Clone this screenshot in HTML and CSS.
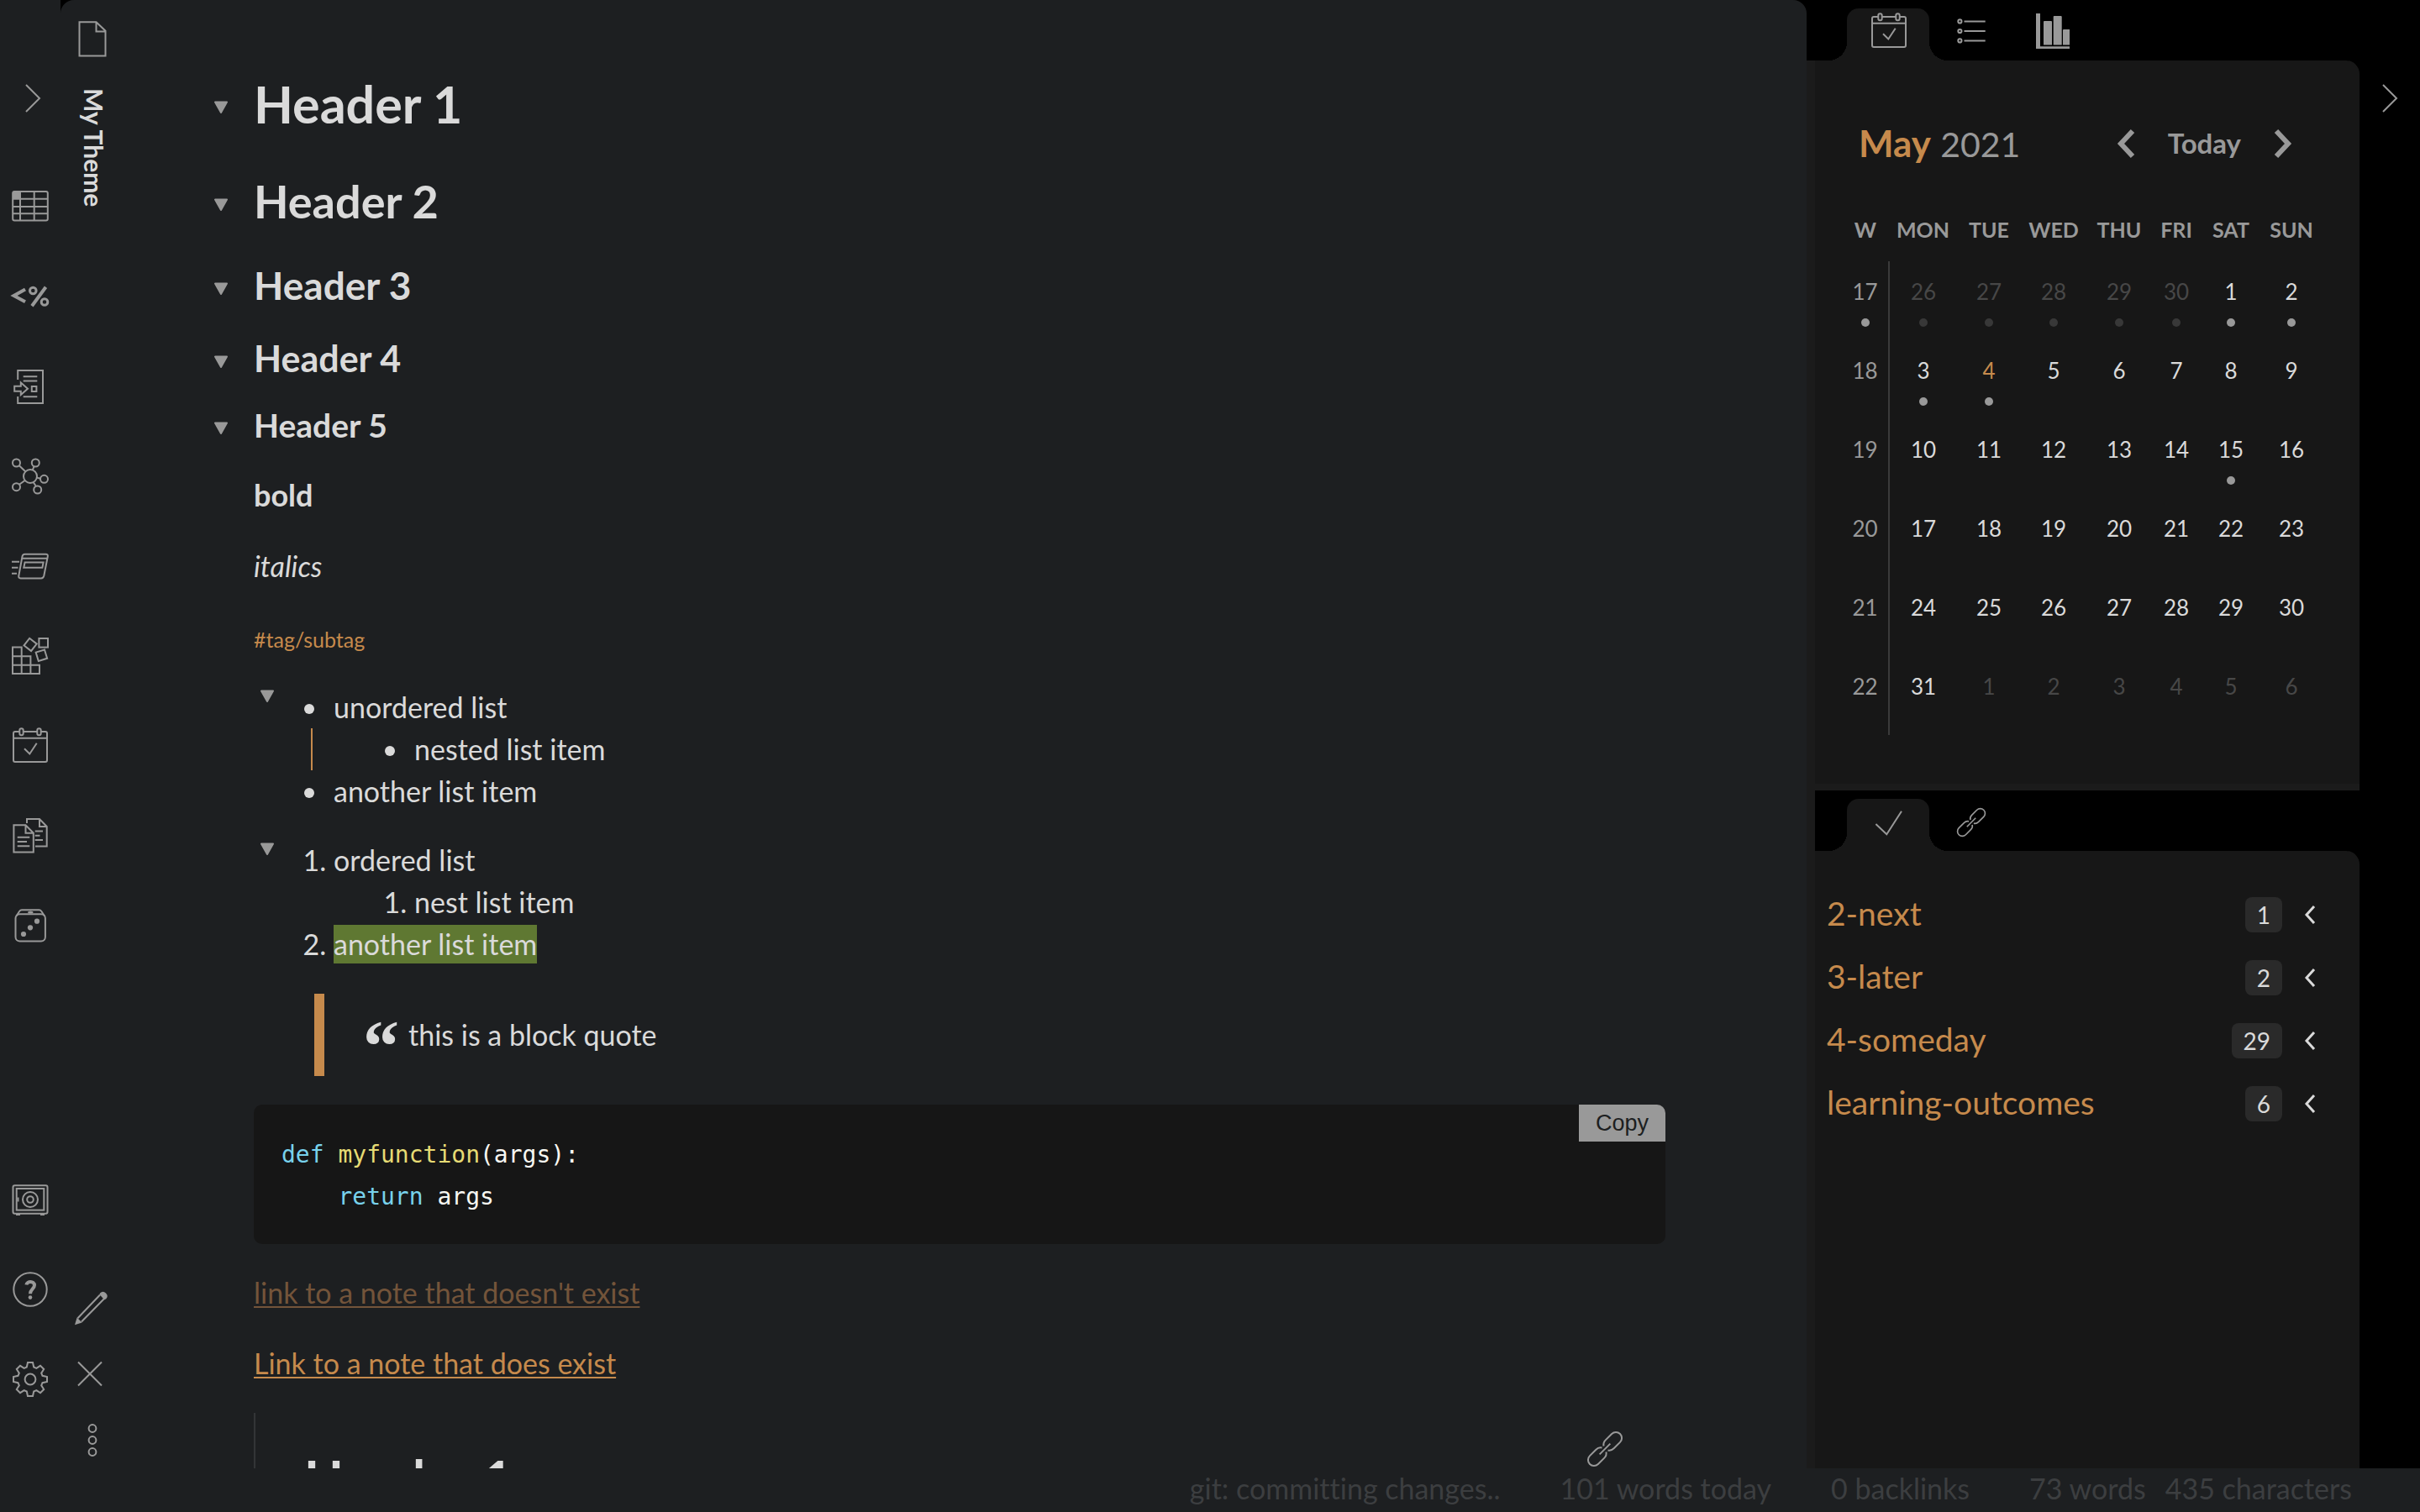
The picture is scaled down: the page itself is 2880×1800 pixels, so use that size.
FILE: index.html
```html
<!DOCTYPE html>
<html lang="en">
<head>
<meta charset="utf-8">
<title>My Theme</title>
<link rel="stylesheet" href="styles.css">
</head>
<body>
<svg class="defs" aria-hidden="true">
  <symbol id="i-chevron" viewBox="0 0 20 34"><path d="M2 1 L18 17 L2 33"/></symbol>
  <symbol id="i-calendar" viewBox="0 0 44 44"><path d="M9 5H4q-2 0-2 2v32q0 2 2 2h36q2 0 2-2V7q0-2-2-2h-5M14 5h16M2 12.7h40"/><rect x="9.3" y="1.2" width="4.4" height="8" rx="2.2"/><rect x="30.3" y="1.2" width="4.4" height="8" rx="2.2"/><path d="M15 25.3 L21.3 31.5 L29.7 18.7"/></symbol>
  <symbol id="i-link" viewBox="0 0 44 44"><g transform="translate(22 22) rotate(-45)"><path d="M1.5 3.5C3 6 5.5 7 8 7H18.5A7 7 0 0 0 18.5 -7H8C5.5 -7 3 -6 1.5 -3.5M-1.5 3.5C-3 6-5.5 7-8 7H-18.5A7 7 0 0 1-18.5-7H-8C-5.5-7-3-6-1.5-3.5M-9 0H9"/></g></symbol>
  <symbol id="i-fold" viewBox="0 0 18 16"><path class="fold-shape" d="M2 1.5H16L9 14Z"/></symbol>
</svg>

<div class="app">
  <div class="workspace">
    <nav class="ribbon" aria-label="Ribbon">
      <button class="icon-btn toggle" aria-label="Expand left sidebar"><svg class="chevron"><use href="#i-chevron"/></svg></button>
      <div class="ribbon-group">
        <button class="icon-btn" aria-label="Tables"><svg viewBox="0 0 44 44"><rect x="1.2" y="4" width="41.6" height="34.5" rx="2"/><path d="M10 4V38.5M26.7 4V38.5M1.2 12.8H42.8M1.2 22H42.8M1.2 30.2H42.8"/><path class="solid" d="M2 4.5H10V12.8H2Z"/></svg></button>
        <button class="icon-btn" aria-label="Templates"><svg viewBox="0 0 44 44"><path class="bold-stroke" d="M16 13.5 L2.5 21 L16 28.2M40.5 10.7 L24 33.3"/><circle class="mid-stroke" cx="25.3" cy="15" r="3.8"/><circle class="mid-stroke" cx="39" cy="28.5" r="3.8"/></svg></button>
        <button class="icon-btn" aria-label="Insert template"><svg viewBox="0 0 44 44"><path d="M7.2 14V3H37V42H7.2V34M13.7 10.2H30.3M13.7 15.6H30.3M13.7 34.2H30.3M3.2 21.8H10.8V17.5L19 24.7L10.8 32V27.8H3.2Z"/><rect x="23.8" y="22" width="5.6" height="6"/></svg></button>
        <button class="icon-btn" aria-label="Graph view"><svg viewBox="0 0 44 44"><circle cx="22" cy="22" r="8"/><circle cx="5.5" cy="6" r="4.5"/><circle cx="28.3" cy="6" r="4.5"/><circle cx="38.5" cy="25.3" r="4.5"/><circle cx="30.7" cy="38" r="4.5"/><circle cx="5.5" cy="34.7" r="4.5"/><path d="M8.8 9.2L16.2 16.2M26.6 10.2L24.8 14.4M34 24.7L30 23.6M28.8 33.8L25.8 29.2M9 31.8L15.6 27"/></svg></button>
        <button class="icon-btn" aria-label="Flashcards"><svg viewBox="0 0 44 44"><path d="M15.5 7.7H40.5Q43.3 7.7 42.8 10.5L38.3 33.5Q37.6 36.4 35 36.4H10.5Q7.8 36.4 8.3 33.5L12.5 10.5Q13 7.7 15.5 7.7M12.3 12.8H42.5M15.6 17.4H37.6L36.4 23.7H14.3ZM0 16.8H9M0 23.7H7.5M0 30.8H6"/></svg></button>
        <button class="icon-btn" aria-label="Blocks"><svg viewBox="0 0 44 44"><path d="M1 11.6H11.7V22.2H1ZM1 22.2H22.4V32.8H1ZM1 32.8H33V43H1ZM11.7 22.2V43M22.4 32.8V43"/><rect x="32.4" y="1" width="10.6" height="10.6"/><rect x="16.7" y="3" width="10.8" height="10.8" transform="rotate(38 22.1 8.4)"/><rect x="30" y="15.8" width="10.8" height="10.8" transform="rotate(-17 35.4 21.2)"/></svg></button>
        <button class="icon-btn" aria-label="Daily note"><svg><use href="#i-calendar"/></svg></button>
        <button class="icon-btn" aria-label="Copy notes"><svg viewBox="0 0 44 44"><path d="M2.4 9.3H16.5L25.8 18.7V41.6H2.4ZM16.5 9.3V18.7H25.8M6.7 23.8H21.3M6.7 29H18M6.7 34.3H21.3M18 7V2.1H33L41.7 11V34.6H28M33 2.1V11H41.7M27.7 16.4H37M27.7 21.8H33.5M27.7 27H37"/></svg></button>
        <button class="icon-btn" aria-label="Random note"><svg viewBox="0 0 44 44"><rect x="4.5" y="8.3" width="35.4" height="32.2" rx="5"/><path d="M5.5 10.5L9 5Q10.2 3.3 12 3.3H32.5Q34.2 3.3 35.4 5L39 10.5"/><ellipse class="solid" cx="22.3" cy="6" rx="3.2" ry="1.6"/><circle class="solid" cx="30" cy="16.7" r="3.1"/><circle class="solid" cx="22" cy="24.3" r="3.1"/><circle class="solid" cx="14" cy="32" r="3.1"/></svg></button>
      </div>
      <div class="ribbon-group bottom">
        <button class="icon-btn" aria-label="Open vault"><svg viewBox="0 0 44 44"><rect x="1.5" y="5.2" width="41" height="33.6" rx="2"/><rect x="5.7" y="9" width="32.6" height="25.6"/><circle cx="22" cy="22" r="9"/><circle cx="22" cy="22" r="3.8"/><path d="M5 40H10M34 40H39M7.5 19.5V24.5"/></svg></button>
        <button class="icon-btn" aria-label="Help"><svg viewBox="0 0 44 44"><circle cx="22" cy="22" r="19.7"/><path class="bold-stroke" d="M17.4 16.6C18 11.6 27 11.6 27 17C27 21.2 22 21.6 22 27.2"/><circle class="solid" cx="22" cy="31.6" r="2.3"/></svg></button>
        <button class="icon-btn" aria-label="Settings"><svg viewBox="0 0 44 44"><path transform="translate(22 22)" d="M-4.2-14.5L-3-20H3L4.2-14.5L7.3-13.2L12-16.2L16.2-12L13.2-7.3L14.5-4.2L20-3V3L14.5 4.2L13.2 7.3L16.2 12L12 16.2L7.3 13.2L4.2 14.5L3 20H-3L-4.2 14.5L-7.3 13.2L-12 16.2L-16.2 12L-13.2 7.3L-14.5 4.2L-20 3V-3L-14.5-4.2L-13.2-7.3L-16.2-12L-12-16.2L-7.3-13.2Z"/><circle cx="22" cy="22" r="6.4"/></svg></button>
      </div>
    </nav>

    <main class="note-pane">
      <header class="view-header">
        <svg class="doc-icon" viewBox="0 0 34 43"><path d="M1.5 1.2H21.5L32.5 11.8V41.6H1.5ZM21.5 1.2V12.6H32.5"/></svg>
        <span class="view-title">My Theme</span>
        <div class="view-actions">
          <button class="icon-btn" aria-label="Edit"><svg viewBox="0 0 44 44"><path d="M32 6.5L5.5 34.2M36.8 11.2L10 38.5"/><path class="solid" d="M2 42.2L4.6 33.6L10.6 39.4Z"/><path class="solid" d="M32 4.6Q35.5 1 39 4.6T39 11.4L37 12.2L31.5 6Z"/></svg></button>
          <button class="icon-btn" aria-label="Close"><svg viewBox="0 0 44 44"><path d="M6 7.5L34 35.5M34 7.5L6 35.5"/></svg></button>
          <button class="icon-btn" aria-label="More options"><svg viewBox="0 0 44 44"><circle cx="23" cy="7.5" r="4.4"/><circle cx="23" cy="21.5" r="4.4"/><circle cx="23" cy="35.5" r="4.4"/></svg></button>
        </div>
      </header>

      <article class="note">
        <h1><button class="fold" aria-label="Fold"><svg><use href="#i-fold"/></svg></button>Header 1</h1>
        <h2><button class="fold" aria-label="Fold"><svg><use href="#i-fold"/></svg></button>Header 2</h2>
        <h3><button class="fold" aria-label="Fold"><svg><use href="#i-fold"/></svg></button>Header 3</h3>
        <h4><button class="fold" aria-label="Fold"><svg><use href="#i-fold"/></svg></button>Header 4</h4>
        <h5><button class="fold" aria-label="Fold"><svg><use href="#i-fold"/></svg></button>Header 5</h5>
        <p><strong>bold</strong></p>
        <p><em>italics</em></p>
        <p><a class="tag" href="#tag">#tag/subtag</a></p>

        <div class="list-block">
          <button class="fold" aria-label="Fold"><svg><use href="#i-fold"/></svg></button>
          <ul>
            <li><span>unordered list</span>
              <ul>
                <li><span>nested list item</span></li>
              </ul>
            </li>
            <li><span>another list item</span></li>
          </ul>
        </div>

        <div class="list-block">
          <button class="fold" aria-label="Fold"><svg><use href="#i-fold"/></svg></button>
          <ol>
            <li>ordered list
              <ol>
                <li>nest list item</li>
              </ol>
            </li>
            <li><mark>another list item</mark></li>
          </ol>
        </div>

        <blockquote><span class="quote-mark">“</span><span>this is a block quote</span></blockquote>

        <div class="code-block">
          <pre><code><span class="kw">def</span> <span class="fn">myfunction</span>(args):
    <span class="kw">return</span> args</code></pre>
          <button class="copy">Copy</button>
        </div>

        <p><a class="missing" href="#missing">link to a note that doesn't exist</a></p>
        <p><a href="#note">Link to a note that does exist</a></p>

        <section class="embed">
          <h1>Header 1</h1>
          <a class="embed-link" href="#embed" aria-label="Open link"><svg><use href="#i-link"/></svg></a>
        </section>
      </article>
    </main>

    <aside class="sidebar">
      <section class="panel calendar-panel">
        <div class="tabs">
          <button class="tab active" aria-label="Calendar"><svg><use href="#i-calendar"/></svg></button>
          <button class="tab" aria-label="Outline"><svg viewBox="0 0 44 44"><circle cx="8.4" cy="10.4" r="2.1"/><circle cx="8.4" cy="22" r="2.1"/><circle cx="8.4" cy="33.4" r="2.1"/><path d="M13.5 10.4H38.7M13.5 22H38.7M13.5 33.4H38.7"/></svg></button>
          <button class="tab" aria-label="Statistics"><svg viewBox="0 0 44 44"><path class="solid" d="M1 1H6V40.3H41V43H1ZM10 11Q10 10 11 10H19Q20 10 20 11V38.4H10ZM21.7 5Q21.7 4 22.7 4H30.7Q31.7 4 31.7 5V38.4H21.7ZM33 21Q33 20 34 20H41V38.4H33Z"/></svg></button>
        </div>
        <div class="panel-body">
          <div class="cal-nav">
            <h2 class="cal-title"><span class="month">May</span> <span class="year">2021</span></h2>
            <button class="cal-arrow" aria-label="Previous month"><svg viewBox="0 0 22 36"><path d="M18 3L4 18L18 33"/></svg></button>
            <button class="today">Today</button>
            <button class="cal-arrow" aria-label="Next month"><svg viewBox="0 0 22 36"><path d="M4 3L18 18L4 33"/></svg></button>
          </div>
          <table class="calendar">
            <colgroup><col class="c-week"><col class="c-mon"><col class="c-tue"><col class="c-wed"><col class="c-thu"><col class="c-fri"><col class="c-sat"><col class="c-sun"></colgroup>
            <thead><tr><th>W</th><th>MON</th><th>TUE</th><th>WED</th><th>THU</th><th>FRI</th><th>SAT</th><th>SUN</th></tr></thead>
            <tbody>
              <tr><td class="week dot">17</td><td class="out dot">26</td><td class="out dot">27</td><td class="out dot">28</td><td class="out dot">29</td><td class="out dot">30</td><td class="dot">1</td><td class="dot">2</td></tr>
              <tr><td class="week">18</td><td class="dot">3</td><td class="now dot">4</td><td>5</td><td>6</td><td>7</td><td>8</td><td>9</td></tr>
              <tr><td class="week">19</td><td>10</td><td>11</td><td>12</td><td>13</td><td>14</td><td class="dot">15</td><td>16</td></tr>
              <tr><td class="week">20</td><td>17</td><td>18</td><td>19</td><td>20</td><td>21</td><td>22</td><td>23</td></tr>
              <tr><td class="week">21</td><td>24</td><td>25</td><td>26</td><td>27</td><td>28</td><td>29</td><td>30</td></tr>
              <tr><td class="week">22</td><td>31</td><td class="out">1</td><td class="out">2</td><td class="out">3</td><td class="out">4</td><td class="out">5</td><td class="out">6</td></tr>
            </tbody>
          </table>
        </div>
      </section>

      <section class="panel tasks-panel">
        <div class="tabs">
          <button class="tab active" aria-label="Tasks"><svg viewBox="0 0 44 44"><path d="M6.4 25L19.3 37.3L37 9.7"/></svg></button>
          <button class="tab" aria-label="Backlinks"><svg class="small"><use href="#i-link"/></svg></button>
        </div>
        <div class="panel-body">
          <ul class="tasks">
            <li><a href="#next">2-next</a><span class="count">1</span><button class="expand" aria-label="Expand"><svg viewBox="0 0 14 24"><path d="M12 2L3 12L12 22"/></svg></button></li>
            <li><a href="#later">3-later</a><span class="count">2</span><button class="expand" aria-label="Expand"><svg viewBox="0 0 14 24"><path d="M12 2L3 12L12 22"/></svg></button></li>
            <li><a href="#someday">4-someday</a><span class="count">29</span><button class="expand" aria-label="Expand"><svg viewBox="0 0 14 24"><path d="M12 2L3 12L12 22"/></svg></button></li>
            <li><a href="#outcomes">learning-outcomes</a><span class="count">6</span><button class="expand" aria-label="Expand"><svg viewBox="0 0 14 24"><path d="M12 2L3 12L12 22"/></svg></button></li>
          </ul>
        </div>
      </section>
    </aside>

    <nav class="ribbon right" aria-label="Right ribbon">
      <button class="icon-btn toggle" aria-label="Collapse right sidebar"><svg class="chevron"><use href="#i-chevron"/></svg></button>
    </nav>
  </div>

  <footer class="status-bar">
    <span>git: committing changes..</span>
    <span>101 words today</span>
    <span>0 backlinks</span>
    <span class="counts"><span>73 words</span><span>435 characters</span></span>
  </footer>
</div>
</body>
</html>
```
FILE: styles.css
```css
:root {
  --bg: #1d1f21;
  --panel: #171717;
  --gutter: #1b1b1b;
  --text: #dadada;
  --muted: #999999;
  --faint: #474747;
  --accent: #c68a4c;
  --ribbon: 72px;
}

* { box-sizing: border-box; }

body {
  margin: 0;
  background: #000;
  color: var(--text);
  font: 34px/50px Lato, "Open Sans", sans-serif;
  font-variant-ligatures: none;
}

button {
  margin: 0;
  padding: 0;
  border: 0;
  background: none;
  color: inherit;
  font: inherit;
}

h1, h2, h3, h4, h5, p, ul, ol, pre, blockquote { margin: 0; padding: 0; }

svg {
  display: block;
  width: 44px;
  height: 44px;
  fill: none;
  stroke: var(--muted);
  stroke-width: 2;
  overflow: visible;
}
svg.defs { position: absolute; width: 0; height: 0; }
.solid { fill: var(--muted); stroke: none; }
.mid-stroke { stroke-width: 3; }
.bold-stroke { stroke-width: 4; }
.fold-shape { fill: var(--muted); stroke-width: 2; stroke-linejoin: round; }

.app { display: flex; flex-direction: column; height: 100vh; }
.workspace { display: flex; flex: 1; min-height: 0; }

/* Ribbons */
.ribbon {
  display: flex;
  flex-direction: column;
  align-items: center;
  flex: 0 0 var(--ribbon);
  padding: 100px 0 84px;
  background: var(--bg);
}
.ribbon.right { background: #000; }
.toggle { padding-left: 6px; }
.ribbon.right .toggle { padding-left: 0; }
svg.chevron { width: 20px; height: 34px; }
.ribbon-group { display: flex; flex-direction: column; gap: 63px; margin-top: 90px; }
.ribbon-group.bottom { margin-top: auto; }

/* Note */
.note-pane {
  display: flex;
  flex: 1;
  min-width: 0;
  overflow: hidden;
  background: var(--bg);
  border-radius: 16px 16px 0 0;
}
.view-header {
  display: flex;
  flex-direction: column;
  align-items: center;
  flex: 0 0 74px;
  padding: 25px 0 11px;
}
svg.doc-icon { width: 34px; height: 43px; margin-left: 2px; }
.view-title {
  margin: 37px 0 0 6px;
  writing-mode: vertical-rl;
  font-size: 30px;
  font-weight: 700;
  line-height: 40px;
}
.view-actions { display: flex; flex-direction: column; gap: 35px; margin-top: auto; }

.note { flex: 1; min-width: 0; padding: 86px 168px 0 156px; }
.note > h1, .note > h2, .note > h3, .note > h4, .note > h5 { display: flex; align-items: center; }
h1 { font-size: 61px; line-height: 76px; }
h2 { font-size: 54px; line-height: 68px; }
h3 { font-size: 46px; line-height: 60px; }
h4 { font-size: 43px; line-height: 54px; }
h5 { font-size: 39px; line-height: 50px; }
.note > h1 { margin-bottom: 44px; }
.note > h2 { margin-bottom: 36px; }
.note > h3 { margin-bottom: 30px; }
.note > h4 { margin-bottom: 27px; }
.note > h5, .note > p { margin-bottom: 34px; }
.fold svg { width: 18px; height: 16px; }
h1 .fold, h2 .fold, h3 .fold, h4 .fold, h5 .fold {
  width: 48px;
  margin-left: -48px;
  padding-top: 8px;
}
strong { font-size: 36px; line-height: 36px; }

a { color: var(--accent); text-decoration: none; }
.note p a {
  text-decoration: underline;
  text-decoration-thickness: 2px;
  text-underline-offset: 3px;
  text-decoration-skip-ink: none;
}
.note p a.tag { font-size: 25px; line-height: 25px; text-decoration: none; }
.note p a.missing { color: #73543a; }

.list-block { display: flex; align-items: flex-start; margin-bottom: 32px; padding-left: 7px; }
.list-block + .list-block { margin-bottom: 34px; }
.list-block .fold { padding: 4px 35px 0 0; line-height: 16px; }
.list-block ul { flex: 1; list-style: none; }
.list-block ul li { display: grid; grid-template-columns: 35px 1fr; align-items: center; }
.list-block ul li::before {
  content: "";
  width: 12px;
  height: 12px;
  margin-top: 4px;
  border-radius: 50%;
  background: var(--text);
}
.list-block ul ul {
  grid-column: 1 / -1;
  margin-left: 8px;
  padding-left: 86px;
  border-left: 2px solid var(--accent);
}
.list-block ol { padding-left: 35px; }
.list-block ol ol { padding-left: 96px; }
mark { padding: 2px 0 3px; background: #5f7832; color: inherit; }

blockquote {
  display: flex;
  gap: 11px;
  margin: 0 0 34px 72px;
  padding: 24px 0 24px 46px;
  border-left: 12px solid var(--accent);
}
.quote-mark { height: 50px; font: 700 86px/78px "Liberation Serif", serif; }

.code-block {
  position: relative;
  margin-bottom: 33px;
  padding: 35px 33px 31px;
  border-radius: 10px;
  background: #161616;
  overflow: hidden;
}
pre { font: 28px/50px "DejaVu Sans Mono", monospace; color: #f8f8f2; }
code { font: inherit; }
.kw { color: #78d2ec; }
.fn { color: #e6db74; }
.copy {
  position: absolute;
  top: 0;
  right: 0;
  padding: 0 20px;
  background: var(--muted);
  color: var(--bg);
  font: 27px/44px "Liberation Sans", Arial, sans-serif;
}

.embed {
  display: flex;
  justify-content: space-between;
  align-items: flex-start;
  padding: 0 50px 0 58px;
  border-left: 2px solid #333537;
}
.embed h1 { padding: 40px 0; }
.embed-link { padding-top: 21px; }

/* Sidebar */
.sidebar {
  display: flex;
  flex-direction: column;
  flex: 0 0 658px;
}
.panel {
  display: flex;
  flex-direction: column;
  background: linear-gradient(to bottom, #000 72px, var(--gutter) 72px);
  padding-left: 10px;
}
.tasks-panel { flex: 1; background: var(--gutter); }
.tasks-panel .tabs { background: #000; }
.tabs { display: flex; height: 72px; padding: 10px 0 0 38px; }
.tab {
  display: flex;
  justify-content: center;
  align-items: flex-start;
  width: 98px;
  padding: 5px 0 0 2px;
}
.tab.active {
  position: relative;
  border-radius: 14px 14px 0 0;
  background: var(--panel);
}
.tab.active::before, .tab.active::after {
  content: "";
  position: absolute;
  bottom: 0;
  width: 22px;
  height: 22px;
}
.tab.active::before { right: 100%; background: radial-gradient(circle at 0 0, transparent 22px, var(--panel) 22px); }
.tab.active::after { left: 100%; background: radial-gradient(circle at 100% 0, transparent 22px, var(--panel) 22px); }
.tab .small { width: 36px; height: 36px; margin-top: 5px; }
.panel-body { position: relative; background: linear-gradient(to left, #000 20px, var(--panel) 20px); }
.panel-body::before {
  content: "";
  position: absolute;
  inset: 0;
  border-radius: 0 16px 0 0;
  background: var(--panel);
}
.panel-body > * { position: relative; }
.calendar-panel .panel-body { padding: 65px 45px 58px 32px; border-bottom: 8px solid var(--gutter); }
.tasks-panel .panel-body { flex: 1; padding: 38px 52px 0 14px; }

.cal-nav { display: flex; align-items: center; padding: 0 36px 0 20px; }
.cal-title { flex: 1; font-size: 44px; font-weight: 400; line-height: 66px; }
.month { color: var(--accent); font-weight: 700; }
.year { color: var(--muted); font-size: 41px; }
.cal-arrow svg { width: 22px; height: 36px; stroke-width: 6; }
.today { margin: 0 38px 2px; color: var(--muted); font-size: 33px; font-weight: 700; }

.calendar { width: 100%; border-collapse: collapse; table-layout: fixed; }
.c-week { width: 56px; }
.c-mon { width: 81px; }
.c-tue { width: 76px; }
.c-wed, .c-thu { width: 78px; }
.c-fri { width: 58px; }
.c-sat, .c-sun { width: 72px; }
.calendar th {
  height: 106px;
  padding: 38px 0 0;
  vertical-align: top;
  color: var(--muted);
  font-size: 25px;
  font-weight: 700;
  line-height: 60px;
}
.calendar td {
  height: 94px;
  padding: 21px 0 0;
  vertical-align: top;
  text-align: center;
  font-size: 26px;
  line-height: 31px;
}
.calendar .week { border-right: 2px solid #3a3a3a; color: var(--muted); }
.calendar .out { color: var(--faint); }
.calendar .now { color: var(--accent); }
.calendar .dot::after {
  content: "";
  display: block;
  width: 10px;
  height: 10px;
  margin: 16px auto 0;
  border-radius: 50%;
  background: var(--muted);
}
.calendar .out.dot::after { background: #383838; }

.tasks { list-style: none; }
.tasks li { display: flex; align-items: center; height: 75px; }
.tasks a { flex: 1; padding-bottom: 4px; font-size: 39px; }
.count {
  padding: 0 14px;
  border-radius: 8px;
  background: #2a2a2a;
  font-size: 28px;
  line-height: 42px;
}
.expand { margin-left: 26px; }
.expand svg { width: 14px; height: 24px; stroke: var(--text); stroke-width: 3; }

/* Status bar */
.status-bar {
  display: flex;
  justify-content: flex-end;
  gap: 71px;
  height: 52px;
  padding-right: 81px;
  background: var(--bg);
  color: #3c3e40;
  line-height: 48px;
}
.counts { display: flex; gap: 23px; }
```
